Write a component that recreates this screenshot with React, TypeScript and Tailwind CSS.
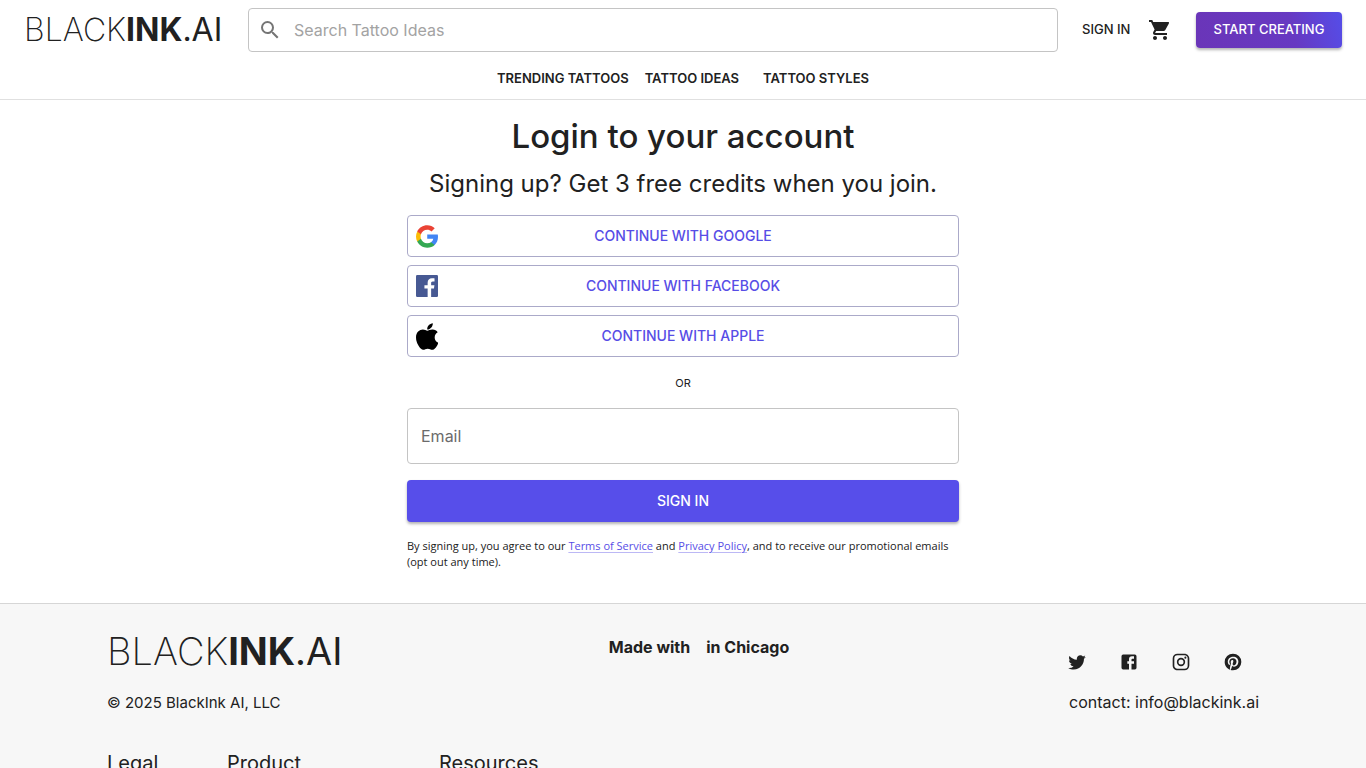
import type { ReactNode } from "react";
import { FaApple } from "react-icons/fa";
import { MdSearch, MdShoppingCart } from "react-icons/md";

const TWITTER =
  "M22.46 6c-.77.35-1.6.58-2.46.69.88-.53 1.56-1.37 1.88-2.38-.83.5-1.75.85-2.72 1.05C18.37 4.5 17.26 4 16 4c-2.35 0-4.27 1.92-4.27 4.29 0 .34.04.67.11.98C8.28 9.09 5.11 7.38 3 4.79c-.37.63-.58 1.37-.58 2.15 0 1.49.75 2.81 1.91 3.56-.71 0-1.37-.2-1.95-.5v.03c0 2.08 1.48 3.82 3.44 4.21a4.22 4.22 0 0 1-1.93.07 4.28 4.28 0 0 0 4 2.98 8.521 8.521 0 0 1-5.33 1.84c-.34 0-.68-.02-1.02-.06C3.44 20.29 5.7 21 8.12 21 16 21 20.33 14.46 20.33 8.79c0-.19 0-.37-.01-.56.84-.6 1.56-1.36 2.14-2.23z";
const FACEBOOK =
  "M5 3h14a2 2 0 0 1 2 2v14a2 2 0 0 1-2 2H5a2 2 0 0 1-2-2V5a2 2 0 0 1 2-2m13 2h-2.5A3.5 3.5 0 0 0 12 8.5V11h-2v3h2v7h3v-7h3v-3h-3V9a1 1 0 0 1 1-1h2V5z";
const INSTAGRAM =
  "M7.8 2h8.4C19.4 2 22 4.6 22 7.8v8.4a5.8 5.8 0 0 1-5.8 5.8H7.8C4.6 22 2 19.4 2 16.2V7.8A5.8 5.8 0 0 1 7.8 2m-.2 2A3.6 3.6 0 0 0 4 7.6v8.8C4 18.39 5.61 20 7.6 20h8.8a3.6 3.6 0 0 0 3.6-3.6V7.6C20 5.61 18.39 4 16.4 4H7.6m9.65 1.5a1.25 1.25 0 0 1 1.25 1.25A1.25 1.25 0 0 1 17.25 8 1.25 1.25 0 0 1 16 6.75a1.25 1.25 0 0 1 1.25-1.25M12 7a5 5 0 0 1 5 5 5 5 0 0 1-5 5 5 5 0 0 1-5-5 5 5 0 0 1 5-5m0 2a3 3 0 0 0-3 3 3 3 0 0 0 3 3 3 3 0 0 0 3-3 3 3 0 0 0-3-3z";
const PINTEREST =
  "M9.04 21.54c.96.29 1.93.46 2.96.46a10 10 0 0 0 10-10A10 10 0 0 0 12 2 10 10 0 0 0 2 12c0 4.25 2.67 7.9 6.44 9.34-.09-.78-.18-2.07 0-2.96l1.15-4.94s-.29-.58-.29-1.5c0-1.38.86-2.41 1.84-2.41.86 0 1.26.63 1.26 1.44 0 .86-.57 2.09-.86 3.27-.17.98.52 1.84 1.52 1.84 1.78 0 3.16-1.9 3.16-4.58 0-2.4-1.72-4.04-4.19-4.04-2.82 0-4.48 2.1-4.48 4.31 0 .86.28 1.73.74 2.3.09.06.09.14.06.29l-.29 1.09c0 .17-.11.23-.28.11-1.28-.56-2.02-2.38-2.02-3.85 0-3.16 2.24-6.03 6.56-6.03 3.44 0 6.12 2.47 6.12 5.75 0 3.44-2.13 6.2-5.18 6.2-.97 0-1.92-.52-2.26-1.13l-.67 2.37c-.23.86-.86 2.01-1.29 2.7v-.03z";

const socials = [
  { name: "Twitter", path: TWITTER },
  { name: "Facebook", path: FACEBOOK },
  { name: "Instagram", path: INSTAGRAM },
  { name: "Pinterest", path: PINTEREST },
];

function GoogleLogo() {
  return (
    <svg viewBox="1 1 21.56 22" className="h-[23px] w-[22px]" aria-hidden="true">
      <path fill="#4285F4" d="M22.56 12.25c0-.78-.07-1.53-.2-2.25H12v4.26h5.92c-.26 1.37-1.04 2.53-2.21 3.31v2.77h3.57c2.08-1.92 3.28-4.74 3.28-8.09z" />
      <path fill="#34A853" d="M12 23c2.97 0 5.46-.98 7.28-2.66l-3.57-2.77c-.98.66-2.23 1.06-3.71 1.06-2.86 0-5.29-1.93-6.16-4.53H2.18v2.84C3.99 20.53 7.7 23 12 23z" />
      <path fill="#FBBC05" d="M5.84 14.09c-.22-.66-.35-1.36-.35-2.09s.13-1.43.35-2.09V7.07H2.18C1.43 8.55 1 10.22 1 12s.43 3.45 1.18 4.93l3.66-2.84z" />
      <path fill="#EA4335" d="M12 5.38c1.62 0 3.06.56 4.21 1.64l3.15-3.15C17.45 2.09 14.97 1 12 1 7.7 1 3.99 3.47 2.18 7.07l3.66 2.84c.87-2.6 3.3-4.53 6.16-4.53z" />
    </svg>
  );
}

function FacebookLogo() {
  return (
    <svg viewBox="0 0 24 24" className="size-[22px]" aria-hidden="true">
      <rect width="24" height="24" rx="1.3" fill="#475993" />
      <path fill="#fff" d="M16.5 24v-9.3h3.1l.5-3.6h-3.6V8.8c0-1 .3-1.8 1.8-1.8h1.9V3.7c-.3 0-1.5-.1-2.8-.1-2.8 0-4.7 1.7-4.7 4.8v2.7H9.2v3.6h3.5V24z" />
    </svg>
  );
}

function Wordmark() {
  return (
    <>
      <span className="font-extralight">BLACK</span>
      <span className="font-bold">INK</span>
      <span>.AI</span>
    </>
  );
}

function ProviderButton({ icon, children }: { icon: ReactNode; children: ReactNode }) {
  return (
    <button
      type="button"
      className="grid h-[42px] w-full grid-cols-[1fr_auto_1fr] items-center rounded border border-[#abaac9] px-2 text-sm font-medium text-[#574de6]"
    >
      {icon}
      <span>{children}</span>
    </button>
  );
}

export default function App() {
  return (
    <div className="bg-white font-['Inter',sans-serif] text-[#212121]">
      <header className="border-b border-[#e0e0e0] pt-2">
        <div className="flex items-center px-6">
          <a href="#home" className="w-56 shrink-0 text-[32px] leading-10 whitespace-nowrap">
            <Wordmark />
          </a>
          <div className="flex h-11 min-w-0 flex-1 items-center gap-3 rounded border border-[#c4c4c4] px-[9px]">
            <MdSearch className="size-6 shrink-0 text-[#757575]" />
            <input
              type="search"
              aria-label="Search Tattoo Ideas"
              placeholder="Search Tattoo Ideas"
              className="min-w-0 flex-1 bg-transparent text-base outline-none placeholder:text-[#a3a3a3]"
            />
          </div>
          <a href="#signin" className="ml-6 w-[50px] text-[13px] font-medium whitespace-nowrap">
            SIGN IN
          </a>
          <button type="button" aria-label="Cart" className="ml-4">
            <MdShoppingCart className="size-6" />
          </button>
          <button
            type="button"
            className="ml-6 h-9 w-[146px] rounded bg-linear-[75deg] from-[#6a35b8] via-[#6739c2] via-65% to-[#554de8] text-[13px] font-medium whitespace-nowrap text-white shadow-[0_2px_3px_rgba(0,0,0,0.3)]"
          >
            START CREATING
          </button>
        </div>
        <nav className="flex h-[47px] items-center justify-center pt-1.5 text-[13px] font-semibold">
          <a href="#trending">TRENDING TATTOOS</a>
          <a href="#ideas" className="ml-4">TATTOO IDEAS</a>
          <a href="#styles" className="ml-6">TATTOO STYLES</a>
        </nav>
      </header>

      <main className="mx-auto flex w-full max-w-[600px] flex-col px-6 pb-[33px]">
        <h1 className="pt-[15px] text-center text-[33px] leading-[42px] font-medium">Login to your account</h1>
        <h2 className="mt-[9px] text-center text-2xl leading-9">Signing up? Get 3 free credits when you join.</h2>
        <div className="mt-[13px] flex flex-col gap-2">
          <ProviderButton icon={<GoogleLogo />}>CONTINUE WITH GOOGLE</ProviderButton>
          <ProviderButton icon={<FacebookLogo />}>CONTINUE WITH FACEBOOK</ProviderButton>
          <ProviderButton icon={<FaApple viewBox="4 32 370 448" className="h-[27px] w-[22px] text-black" />}>
            CONTINUE WITH APPLE
          </ProviderButton>
        </div>
        <p className="mt-[17px] mb-4 text-center text-[11px] leading-[18px]">OR</p>
        <form className="flex flex-col gap-4">
          <input
            type="email"
            aria-label="Email"
            placeholder="Email"
            className="h-14 w-full rounded border border-[#c4c4c4] px-[13px] text-base outline-none placeholder:text-[#6b6b6b]"
          />
          <button
            type="submit"
            className="h-[42px] w-full rounded bg-[#574eea] text-sm font-medium text-white shadow-[0_2px_3px_rgba(0,0,0,0.3)]"
          >
            SIGN IN
          </button>
        </form>
        <p className="mt-4 font-['Open_Sans',sans-serif] text-[11px] leading-4">
          By signing up, you agree to our{" "}
          <a href="#terms" className="text-[#574de6] underline decoration-[#574de6]/40 underline-offset-2">Terms of Service</a> and{" "}
          <a href="#privacy" className="text-[#574de6] underline decoration-[#574de6]/40 underline-offset-2">Privacy Policy</a>, and to
          receive our promotional emails (opt out any time).
        </p>
      </main>

      <footer className="border-t border-[#d6d6d6] bg-[#f7f7f7]">
        <div className="mx-auto max-w-[1200px] px-6 pt-[23px]">
          <div className="grid grid-cols-3">
            <div>
              <a href="#home" className="block text-[38px] leading-[48px] whitespace-nowrap">
                <Wordmark />
              </a>
              <p className="mt-4 text-[15px] leading-6">© 2025 BlackInk AI, LLC</p>
            </div>
            <p className="flex justify-center gap-4 pt-2 pl-8 text-base font-bold">
              <span>Made with</span>
              <span>in Chicago</span>
            </p>
            <div className="flex flex-col items-end">
              <div className="flex gap-8 pt-[25px] pr-4">
                {socials.map((social) => (
                  <a key={social.name} href="#social" aria-label={social.name}>
                    <svg viewBox="0 0 24 24" className="size-5" fill="currentColor" aria-hidden="true">
                      <path d={social.path} />
                    </svg>
                  </a>
                ))}
              </div>
              <p className="mt-[18px] text-base">contact: info@blackink.ai</p>
            </div>
          </div>
          <div className="mt-8 flex text-xl leading-8">
            <h3 className="w-[120px]">Legal</h3>
            <h3 className="w-[212px]">Product</h3>
            <h3>Resources</h3>
          </div>
        </div>
      </footer>
    </div>
  );
}
